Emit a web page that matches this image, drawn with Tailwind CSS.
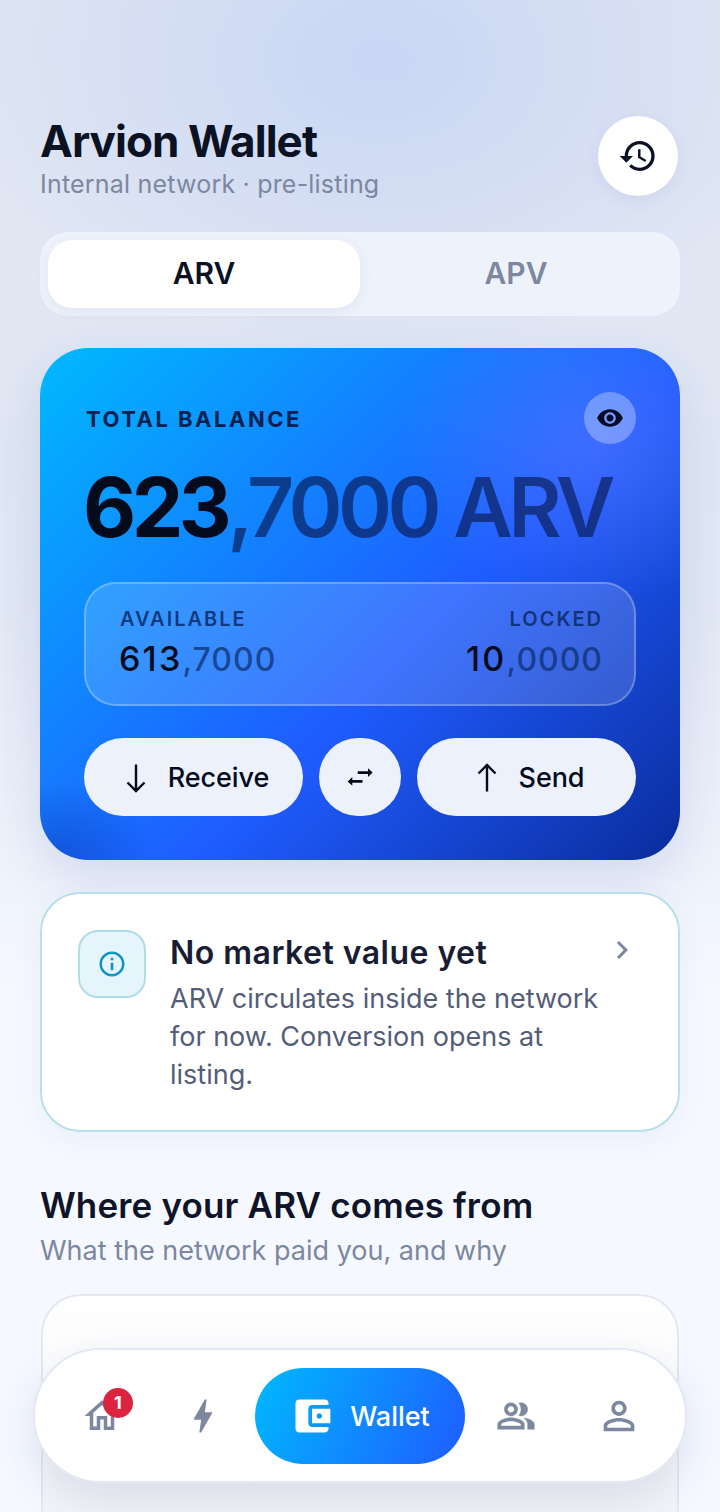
<!DOCTYPE html>
<html lang="en">
<head>
    <meta charset="UTF-8">
    <meta name="viewport" content="width=device-width, initial-scale=1.0">
    <title>Arvion Wallet</title>
    <script src="https://cdn.jsdelivr.net/npm/@tailwindcss/browser@4"></script>
</head>
<body class="font-['Inter',sans-serif]">
    <div class="relative w-[720px] h-[1512px] overflow-hidden bg-[#f5f8ff]">
        <!-- page glow -->
        <div class="absolute inset-0 bg-[radial-gradient(420px_300px_at_380px_60px,#c9d7f5_0%,#d2dcf3_40%,transparent_100%),linear-gradient(180deg,#dfe5f2_0px,#e2e8f4_600px,#f5f8ff_1000px)]"></div>

        <div class="relative px-10 pt-[116px]">
            <!-- header -->
            <div class="flex justify-between items-start h-[80px]">
                <div>
                    <h1 class="text-[44px] leading-[50px] font-bold tracking-[-0.95px] text-[#0b1224]">Arvion Wallet</h1>
                    <p class="text-[25px] leading-[36px] tracking-[0.2px] text-[#7d879f]">Internal network · pre-listing</p>
                </div>
                <button class="w-[80px] h-[80px] mr-[2px] rounded-full bg-white flex items-center justify-center shadow-[0_4px_16px_rgba(60,80,140,0.08)]">
                    <svg class="w-[40px] h-[40px] text-[#0b1224]" viewBox="0 0 24 24" fill="currentColor"><path d="M13 3c-4.97 0-9 4.03-9 9H1l3.89 3.89.07.14L9 12H6c0-3.87 3.13-7 7-7s7 3.13 7 7-3.13 7-7 7c-1.93 0-3.68-.79-4.94-2.06l-1.42 1.42C8.27 19.99 10.51 21 13 21c4.97 0 9-4.03 9-9s-4.03-9-9-9zm-1 5v5l4.28 2.54.72-1.21-3.5-2.08V8H12z"/></svg>
                </button>
            </div>

            <!-- token tabs -->
            <div class="mt-[36px] h-[84px] p-2 rounded-[28px] bg-[#eef2fb] flex">
                <div class="flex-1 pb-[2px] rounded-[24px] bg-white flex items-center justify-center text-[30px] font-semibold text-[#0b1224] shadow-[0_4px_14px_rgba(60,80,140,0.08)]">ARV</div>
                <div class="flex-1 pb-[2px] flex items-center justify-center text-[30px] font-semibold text-[#7d879f]">APV</div>
            </div>

            <!-- balance card -->
            <div class="mt-8 h-[512px] rounded-[48px] px-[44px] pt-[44px] bg-[radial-gradient(190px_160px_at_550px_95px,rgba(100,125,255,0.45),transparent),radial-gradient(100px_80px_at_15px_512px,rgba(10,50,170,0.45),transparent),linear-gradient(135deg,#00b9ff_0%,#1f5cff_58%,#0a2c9c_100%)] shadow-[0_20px_50px_rgba(40,70,160,0.14)]">
                <div class="flex justify-between items-start h-[52px]">
                    <span class="mt-[14px] ml-[2px] text-[22px] leading-[26px] font-bold tracking-[2.5px] text-[#06214f]">TOTAL BALANCE</span>
                    <span class="w-[52px] h-[52px] rounded-full bg-white/30 flex items-center justify-center">
                        <svg class="w-[28px] h-[28px] text-[#030b24]" viewBox="0 0 24 24" fill="currentColor"><path d="M12 4.5C7 4.5 2.73 7.61 1 12c1.73 4.39 6 7.5 11 7.5s9.27-3.11 11-7.5c-1.73-4.39-6-7.5-11-7.5zM12 17c-2.76 0-5-2.24-5-5s2.24-5 5-5 5 2.24 5 5-2.24 5-5 5zm0-8c-1.66 0-3 1.34-3 3s1.34 3 3 3 3-1.34 3-3-1.34-3-3-3z"/></svg>
                    </span>
                </div>
                <div class="mt-[16px] -ml-[1px] text-[82px] leading-[96px] font-bold tracking-[-4.55px] whitespace-nowrap text-[#030b1c]">623<span class="font-semibold text-[#0a1f5c]/70">,7000 ARV</span></div>

                <div class="mt-[26px] h-[124px] rounded-[32px] border-2 border-white/25 bg-white/15 px-[34px] pt-[23px] flex justify-between">
                    <div>
                        <div class="text-[20px] leading-[24px] font-semibold tracking-[2px] text-[#0a2a66]/85">AVAILABLE</div>
                        <div class="mt-[6px] -ml-[1px] text-[34px] leading-[44px] font-[550] tracking-[2.2px] text-[#030b1c]">613<span class="text-[32px] font-medium tracking-[1px] text-[#0a2a66]/70">,7000</span></div>
                    </div>
                    <div class="text-right -mr-[3px]">
                        <div class="text-[20px] leading-[24px] font-semibold tracking-[2px] text-[#0a2a66]/85">LOCKED</div>
                        <div class="mt-[6px] text-[34px] leading-[44px] font-[550] tracking-[2.2px] text-[#030b1c]">10<span class="text-[32px] font-medium tracking-[1px] text-[#0a2a66]/70">,0000</span></div>
                    </div>
                </div>

                <div class="mt-8 flex gap-4">
                    <button class="flex-1 h-[78px] pt-[2px] rounded-full bg-[#edf1fb] flex items-center justify-center gap-[14px] text-[27px] font-[550] tracking-[-0.1px] text-[#030b1c]">
                        <svg class="w-[36px] h-[36px]" viewBox="0 0 36 36" fill="none" stroke="currentColor" stroke-width="2.4"><path d="M18 4.5v26M9.5 22.5l8.5 8.5 8.5-8.5"/></svg>
                        Receive
                    </button>
                    <button class="w-[82px] h-[78px] rounded-full bg-[#edf1fb] flex items-center justify-center text-[#030b1c]">
                        <svg class="w-[30px] h-[30px]" viewBox="0 0 30 30" fill="currentColor"><path d="M12.7 9.3H23V6.2l4.6 4.4-4.6 4.4v-3.1H12.7zM2.7 19.4l4.6-4.4v3.1h10.2v2.6H7.3v3.1z"/></svg>
                    </button>
                    <button class="flex-1 h-[78px] pt-[2px] rounded-full bg-[#edf1fb] flex items-center justify-center gap-[14px] text-[27px] font-[550] tracking-[-0.1px] text-[#030b1c]">
                        <svg class="w-[36px] h-[36px]" viewBox="0 0 36 36" fill="none" stroke="currentColor" stroke-width="2.4"><path d="M18 31.5v-26M9.5 13.5L18 5l8.5 8.5"/></svg>
                        Send
                    </button>
                </div>
            </div>

            <!-- notice -->
            <div class="mt-8 h-[240px] rounded-[40px] border-2 border-[#b9dfea] bg-white px-[36px] pt-[36px] flex shadow-[0_8px_30px_rgba(60,80,140,0.06)]">
                <div class="w-[68px] h-[68px] shrink-0 mr-[24px] rounded-[20px] border-2 border-[#b0dcea] bg-[#e6f4fb] flex items-center justify-center">
                    <svg class="w-[30px] h-[30px] text-[#0a95c4]" viewBox="0 0 24 24" fill="currentColor"><path d="M11 7h2v2h-2zm0 4h2v6h-2zm1-9C6.48 2 2 6.48 2 12s4.48 10 10 10 10-4.48 10-10S17.52 2 12 2zm0 18c-4.41 0-8-3.59-8-8s3.59-8 8-8 8 3.59 8 8-3.59 8-8 8z"/></svg>
                </div>
                <div class="flex-1">
                    <h2 class="mt-[1px] text-[32px] leading-[44px] font-semibold tracking-[0.47px] text-[#181d33]">No market value yet</h2>
                    <p class="mt-[5px] text-[27px] leading-[38px] text-[#535d78]">ARV circulates inside the network for now. Conversion opens at listing.</p>
                </div>
                <svg class="w-[36px] h-[36px] mt-[2px] mr-[2px] shrink-0 text-[#7d879f]" viewBox="0 0 24 24" fill="currentColor"><path d="M10 6 8.59 7.41 13.17 12l-4.58 4.59L10 18l6-6z"/></svg>
            </div>

            <!-- earnings -->
            <h2 class="mt-[49px] text-[35px] leading-[48px] font-semibold tracking-[0.16px] text-[#0f1429]">Where your ARV comes from</h2>
            <p class="mt-[3px] text-[27px] leading-[38px] text-[#7d879f]">What the network paid you, and why</p>
            <div class="mt-[24px] mx-[1px] h-[400px] rounded-[40px] border-2 border-[#e3e7f1] bg-[linear-gradient(180deg,#ffffff_0%,#f3f4f8_50%,#eceef4_100%)]"></div>
        </div>

        <!-- bottom nav -->
        <div class="absolute left-[33px] top-[1348px] w-[654px] h-[135px] rounded-full border-2 border-[#e4e8f3] bg-white px-[16px] flex items-center shadow-[0_16px_40px_rgba(40,60,120,0.12)]">
            <div class="w-[102px] flex justify-center">
                <div class="relative">
                    <svg class="w-[42px] h-[42px] text-[#7d879f]" viewBox="0 0 24 24" fill="currentColor"><path d="M12 5.69l5 4.5V18h-2v-6H9v6H7v-7.81l5-4.5M12 3L2 12h3v8h6v-6h2v6h6v-8h3L12 3z"/></svg>
                    <span class="absolute -top-[7px] left-[22px] w-[30px] h-[30px] rounded-full bg-[#dc2340] flex items-center justify-center text-[18px] font-bold text-white">1</span>
                </div>
            </div>
            <div class="w-[102px] flex justify-center">
                <svg class="w-[44px] h-[44px] mr-[2px] text-[#7d879f]" viewBox="0 0 24 24" fill="currentColor"><path d="M11 21h-1l1-7H7.5c-.58 0-.57-.32-.38-.66.19-.34.05-.08.07-.12C8.48 10.94 10.42 7.54 13 3h1l-1 7h3.5c.49 0 .56.33.47.51l-.07.15C12.96 17.55 11 21 11 21z"/></svg>
            </div>
            <div class="w-[210px] h-[96px] rounded-full bg-[linear-gradient(115deg,#00b9ff_0%,#1f5cff_100%)] flex items-center justify-center gap-4 text-[27px] font-medium text-white">
                <svg class="w-[44px] h-[44px]" viewBox="0 0 24 24" fill="currentColor"><path d="M21 18v1c0 1.1-.9 2-2 2H5c-1.11 0-2-.9-2-2V5c0-1.1.89-2 2-2h14c1.1 0 2 .9 2 2v1h-9c-1.11 0-2 .9-2 2v8c0 1.1.89 2 2 2h9zm-9-2h10V8H12v8zm4-2.5c-.83 0-1.5-.67-1.5-1.5s.67-1.5 1.5-1.5 1.5.67 1.5 1.5-.67 1.5-1.5 1.5z"/></svg>
                <span class="mt-[3px]">Wallet</span>
            </div>
            <div class="w-[102px] flex justify-center">
                <svg class="w-[40px] h-[40px] text-[#7d879f]" viewBox="0 0 24 24" fill="currentColor" stroke="currentColor" stroke-width="0.25"><path d="M16.67 13.13C18.04 14.06 19 15.32 19 17v3h4v-3c0-2.18-3.57-3.47-6.33-3.87zM15 12c2.21 0 4-1.79 4-4s-1.79-4-4-4c-.47 0-.91.1-1.33.24C14.5 5.27 15 6.58 15 8s-.5 2.73-1.33 3.76c.42.14.86.24 1.33.24zM9 12c2.21 0 4-1.79 4-4s-1.79-4-4-4-4 1.79-4 4 1.79 4 4 4zm0-6c1.1 0 2 .9 2 2s-.9 2-2 2-2-.9-2-2 .9-2 2-2zm0 7c-2.67 0-8 1.34-8 4v3h16v-3c0-2.66-5.33-4-8-4zm6 5H3v-.99C3.2 16.29 6.3 15 9 15s5.8 1.29 6 2v1z"/></svg>
            </div>
            <div class="w-[102px] flex justify-center">
                <svg class="w-[46px] h-[46px] ml-[2px] text-[#7d879f]" viewBox="0 0 24 24" fill="currentColor"><path d="M12 5.9c1.16 0 2.1.94 2.1 2.1s-.94 2.1-2.1 2.1S9.9 9.16 9.9 8s.94-2.1 2.1-2.1m0 9c2.97 0 6.1 1.46 6.1 2.1v1.1H5.9V17c0-.64 3.13-2.1 6.1-2.1M12 4C9.79 4 8 5.79 8 8s1.79 4 4 4 4-1.79 4-4-1.79-4-4-4zm0 9c-2.67 0-8 1.34-8 4v3h16v-3c0-2.66-5.33-4-8-4z"/></svg>
            </div>
        </div>
    </div>
</body>
</html>
